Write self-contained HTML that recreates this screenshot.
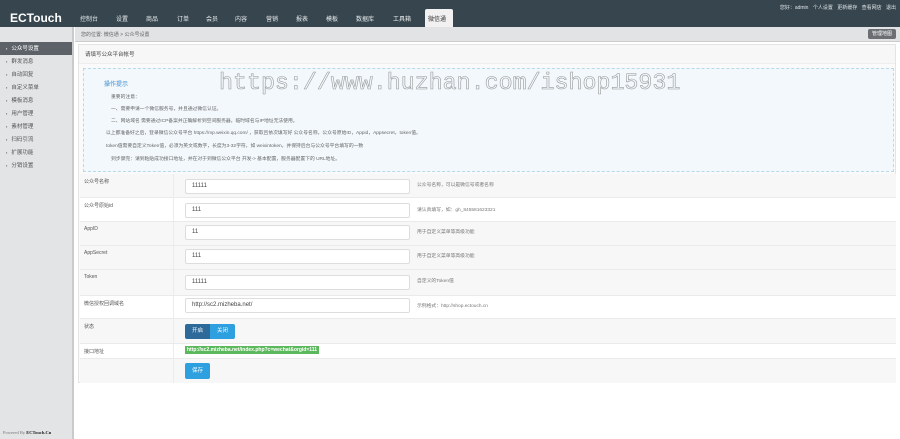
<!DOCTYPE html>
<html><head><meta charset="utf-8"><style>
*{margin:0;padding:0;box-sizing:border-box}
body{width:900px;height:439px;overflow:hidden;background:#fff;font-family:"Liberation Sans","Noto Sans CJK SC",sans-serif;font-size:6px;color:#555;position:relative}
.top{position:absolute;left:0;top:0;width:900px;height:27px;background:#36454e}
.logo{position:absolute;left:10px;top:11px;color:#fff;font-size:12px;font-weight:bold}
.nav span{position:absolute;top:14px;color:#e8ecee;font-size:6px}
.act{position:absolute;left:425px;top:9px;width:28px;height:18px;background:#f1f1f1;border-radius:2px 2px 0 0;color:#333;font-size:6px;padding:5px 0 0 3px}
.user{position:absolute;right:4px;top:4px;color:#e0e4e6;font-size:5px;word-spacing:3px}
.crumb{position:absolute;left:75px;top:27px;width:825px;height:15px;background:#e2e3e5;border-bottom:1px solid #ccc;color:#666;font-size:5px;padding:4px 0 0 6px}
.mbtn{position:absolute;right:4px;top:29px;width:28px;height:10px;background:#6b6f73;border-radius:2px;color:#fff;font-size:5px;text-align:center;line-height:10px}
.side{position:absolute;left:0;top:27px;width:74px;height:412px;background:#e3e4e6;border-right:2px solid #c9cacc}
.side div{height:13px;line-height:13px;padding-left:6px;color:#555;font-size:5.5px}
.side div:before{content:"▪";font-size:4px;margin-right:4px}
.side .on{background:#5d6268;color:#fff}
.side .first{margin-top:15px}
.pw{position:absolute;left:3px;top:430px;font-size:4.5px;color:#777;font-family:"Liberation Serif",serif}
.pw b{color:#222}
.panel{position:absolute;left:78px;top:44px;width:818px;height:339px;border:1px solid #e4e4e4;background:#fafafa}
.ph{height:19px;padding:5px 0 0 6px;font-size:5.5px;color:#444;background:#f7f7f7;border-bottom:1px solid #eee}
.tip{position:absolute;left:4px;top:23px;width:811px;height:104px;border:1px dashed #b9d9ea;background:#f2f8fc}
.tip .t{position:absolute;left:20px;top:10px;color:#3a8ad0;font-size:6px}
.tip p{position:absolute;left:27px;font-size:4.8px;color:#666}
.wm{position:absolute;left:135px;top:0px;font-family:"Liberation Mono",monospace;font-size:23.3px;line-height:28px;color:transparent;-webkit-text-stroke:0.6px #999;white-space:nowrap}
.row{position:absolute;left:1px;width:816px;border-bottom:1px solid #eaeaea}
.row .l{position:absolute;left:4px;top:4px;font-size:5px;color:#555}
.row .c{position:absolute;left:93px;top:0;bottom:0;border-left:1px solid #ececec}
.row .i{position:absolute;left:105px;width:225px;height:15px;border:1px solid #ddd;border-radius:2px;background:#fff;font-size:6px;color:#444;padding:3px 6px}
.row .h{position:absolute;left:337px;font-size:4.8px;color:#777}
</style></head><body>
<div class="top">
<div class="logo">ECTouch</div>
<div class="nav"><span style="left:80px">控制台</span><span style="left:116px">设置</span><span style="left:146px">商品</span><span style="left:177px">订单</span><span style="left:206px">会员</span><span style="left:235px">内容</span><span style="left:266px">营销</span><span style="left:296px">报表</span><span style="left:326px">模板</span><span style="left:356px">数据库</span><span style="left:393px">工具箱</span></div>
<div class="act">微信通</div>
<div class="user">您好：admin 个人设置 更新缓存 查看网店 退出</div>
</div>
<div class="side"><div class="on first">公众号设置</div><div>群发消息</div><div>自动回复</div><div>自定义菜单</div><div>模板消息</div><div>用户管理</div><div>素材管理</div><div>扫码引流</div><div>扩展功能</div><div>分销设置</div></div>
<div class="pw">Powered By <b>ECTouch.Cn</b></div>
<div class="crumb">您的位置: 微信通 &gt; 公众号设置</div>
<div class="mbtn">管理地图</div>
<div class="panel">
<div class="ph">请填写公众平台帐号</div>
<div class="tip">
<div class="t">操作提示</div>
<div class="wm">https://www.huzhan.com/ishop15931</div>
<p style="top:24px">重要的注意：</p>
<p style="top:36px">一、需要申请一个微信服务号，并且通过微信认证。</p>
<p style="top:48px">二、网站域名 需要通过ICP备案并正确解析到空间服务器，临时域名与IP地址无法使用。</p>
<p style="top:60px;left:22px">以上都准备好之后，登录微信公众号平台 https://mp.weixin.qq.com/ ，获取且依次填写好 公众号名称，公众号原始ID，Appid，Appsecret，token值。</p>
<p style="top:73px;left:22px">token值需要自定义Token值，必须为英文或数字，长度为3-32字符，如 weixintoken，并保持后台与公众号平台填写的一致</p>
<p style="top:86px;left:27px">到步骤完：请到粘贴成功接口地址，并在对于到微信公众平台 开发-> 基本配置，服务器配置下的 URL地址。</p>
</div>
<div class="row" style="top:129px;height:24px;background:#f7f7f7"><span class="l">公众号名称</span><div class="c"></div><div class="i" style="top:5px">11111</div><span class="h" style="top:7px">公众号名称，可以是微信号或者名称</span></div>
<div class="row" style="top:153px;height:24px;background:#fff"><span class="l">公众号原始id</span><div class="c"></div><div class="i" style="top:5px">111</div><span class="h" style="top:8px">请认真填写，如：gh_845581623321</span></div>
<div class="row" style="top:177px;height:24px;background:#f7f7f7"><span class="l">AppID</span><div class="c"></div><div class="i" style="top:3px">11</div><span class="h" style="top:6px">用于自定义菜单等高级功能</span></div>
<div class="row" style="top:201px;height:24px;background:#f7f7f7"><span class="l">AppSecret</span><div class="c"></div><div class="i" style="top:3px">111</div><span class="h" style="top:6px">用于自定义菜单等高级功能</span></div>
<div class="row" style="top:225px;height:26px;background:#f7f7f7"><span class="l">Token</span><div class="c"></div><div class="i" style="top:5px">11111</div><span class="h" style="top:7px">自定义的Token值</span></div>
<div class="row" style="top:251px;height:23px;background:#fff"><span class="l">微信授权回调域名</span><div class="c"></div><div class="i" style="top:2px">http://sc2.mizheba.net/</div><span class="h" style="top:6px">示例格式：http://shop.ectouch.cn</span></div>
<div class="row" style="top:274px;height:25px;background:#f7f7f7"><span class="l">状态</span><div class="c"></div><div style="position:absolute;left:105px;top:5px;width:50px;height:15px;border-radius:2px;overflow:hidden;font-size:5.5px;color:#fff;line-height:15px"><span style="display:inline-block;width:25px;background:#2d6a9a;text-align:center">开启</span><span style="display:inline-block;width:25px;background:#2ea0df;text-align:center">关闭</span></div></div>
<div class="row" style="top:299px;height:15px;background:#fff"><span class="l" style="top:4px">接口地址</span><div class="c"></div><div style="position:absolute;left:105px;top:2px;background:#5cb85c;color:#fff;font-size:5px;font-weight:bold;padding:1px 2px">http://sc2.mizheba.net/index.php?c=wechat&amp;orgid=111</div></div>
<div class="row" style="top:314px;height:24px;background:#f7f7f7;border:none"><div class="c"></div><div style="position:absolute;left:105px;top:4px;width:25px;height:16px;background:#2ea0df;border-radius:2px;color:#fff;font-size:5.5px;text-align:center;line-height:16px">保存</div></div>
</div>
</body></html>
